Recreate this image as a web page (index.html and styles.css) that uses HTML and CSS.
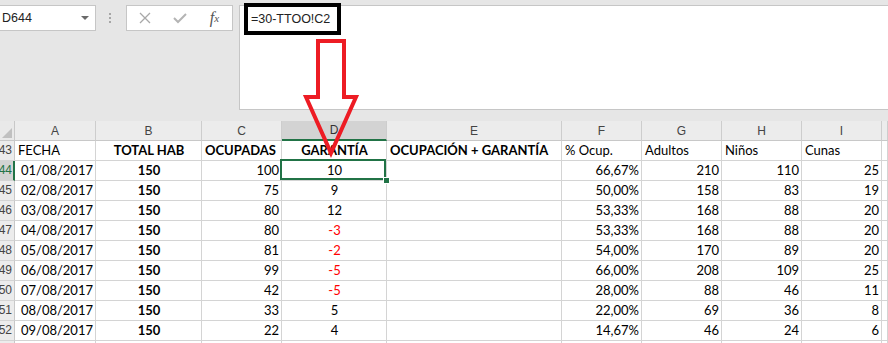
FILE: index.html
```html
<!DOCTYPE html>
<html>
<head>
<meta charset="utf-8">
<link rel="stylesheet" href="styles.css">
</head>
<body>
<div class="toolbar">
  <div class="namebox"><span>D644</span><span class="caret"></span></div>
  <div class="dots"><i></i><i></i><i></i></div>
  <div class="btns">
    <span class="btn"><svg width="12" height="12" viewBox="0 0 12 12"><path d="M1 1 L11 11 M11 1 L1 11" stroke="#a8a8a8" stroke-width="1.3" fill="none"/></svg></span>
    <span class="btn"><svg width="14" height="12" viewBox="0 0 14 12"><path d="M1 6 L5 10 L13 2" stroke="#b4b4b4" stroke-width="2" fill="none"/></svg></span>
    <span class="btn fx">f<sub>x</sub></span>
  </div>
  <div class="formula"><span class="ftext">=30-TTOO!C2</span></div>
</div>

<div class="grid">
  <div class="corner"><i></i></div>
  <div class="ch">A</div><div class="ch">B</div><div class="ch">C</div><div class="ch sel">D</div><div class="ch">E</div><div class="ch">F</div><div class="ch">G</div><div class="ch">H</div><div class="ch">I</div><div class="ch"></div>

  <div class="rh"><span>643</span></div>
  <div class="c l">FECHA</div><div class="c m b">TOTAL HAB</div><div class="c l b">OCUPADAS</div><div class="c m b">GARANTÍA</div><div class="c l b">OCUPACIÓN + GARANTÍA</div><div class="c l">% Ocup.</div><div class="c l">Adultos</div><div class="c l">Niños</div><div class="c l">Cunas</div><div class="c"></div>

  <div class="rh rsel"><span>644</span></div>
  <div class="c r">01/08/2017</div><div class="c m b">150</div><div class="c r">100</div><div class="c m active">10</div><div class="c"></div><div class="c r">66,67%</div><div class="c r">210</div><div class="c r">110</div><div class="c r">25</div><div class="c"></div>

  <div class="rh"><span>645</span></div>
  <div class="c r">02/08/2017</div><div class="c m b">150</div><div class="c r">75</div><div class="c m">9</div><div class="c"></div><div class="c r">50,00%</div><div class="c r">158</div><div class="c r">83</div><div class="c r">19</div><div class="c"></div>

  <div class="rh"><span>646</span></div>
  <div class="c r">03/08/2017</div><div class="c m b">150</div><div class="c r">80</div><div class="c m">12</div><div class="c"></div><div class="c r">53,33%</div><div class="c r">168</div><div class="c r">88</div><div class="c r">20</div><div class="c"></div>

  <div class="rh"><span>647</span></div>
  <div class="c r">04/08/2017</div><div class="c m b">150</div><div class="c r">80</div><div class="c m neg">-3</div><div class="c"></div><div class="c r">53,33%</div><div class="c r">168</div><div class="c r">88</div><div class="c r">20</div><div class="c"></div>

  <div class="rh"><span>648</span></div>
  <div class="c r">05/08/2017</div><div class="c m b">150</div><div class="c r">81</div><div class="c m neg">-2</div><div class="c"></div><div class="c r">54,00%</div><div class="c r">170</div><div class="c r">89</div><div class="c r">20</div><div class="c"></div>

  <div class="rh"><span>649</span></div>
  <div class="c r">06/08/2017</div><div class="c m b">150</div><div class="c r">99</div><div class="c m neg">-5</div><div class="c"></div><div class="c r">66,00%</div><div class="c r">208</div><div class="c r">109</div><div class="c r">25</div><div class="c"></div>

  <div class="rh"><span>650</span></div>
  <div class="c r">07/08/2017</div><div class="c m b">150</div><div class="c r">42</div><div class="c m neg">-5</div><div class="c"></div><div class="c r">28,00%</div><div class="c r">88</div><div class="c r">46</div><div class="c r">11</div><div class="c"></div>

  <div class="rh"><span>651</span></div>
  <div class="c r">08/08/2017</div><div class="c m b">150</div><div class="c r">33</div><div class="c m">5</div><div class="c"></div><div class="c r">22,00%</div><div class="c r">69</div><div class="c r">36</div><div class="c r">8</div><div class="c"></div>

  <div class="rh"><span>652</span></div>
  <div class="c r">09/08/2017</div><div class="c m b">150</div><div class="c r">22</div><div class="c m">4</div><div class="c"></div><div class="c r">14,67%</div><div class="c r">46</div><div class="c r">24</div><div class="c r">6</div><div class="c"></div>

  <div class="rh"><span>653</span></div>
  <div class="c"></div><div class="c"></div><div class="c"></div><div class="c"></div><div class="c"></div><div class="c"></div><div class="c"></div><div class="c"></div><div class="c"></div><div class="c"></div>
</div>

<svg class="arrow" width="888" height="343" viewBox="0 0 888 343">
  <path d="M318 41 L344 41 L344 97 L356 97 L331 153 L306 97 L318 97 Z" fill="none" stroke="#ed1c24" stroke-width="4" stroke-linejoin="miter"/>
</svg>
</body>
</html>
```
FILE: styles.css
```css
html, body {
  margin: 0;
  padding: 0;
}
body {
  width: 888px;
  height: 343px;
  overflow: hidden;
  background: #ffffff;
  position: relative;
}

.toolbar {
  height: 121px;
  box-sizing: border-box;
  padding-top: 5px;
  background: #e6e6e6;
  display: flex;
  align-items: flex-start;
}
.namebox {
  margin-left: -1px;
  width: 97px;
  height: 26px;
  box-sizing: border-box;
  border: 1px solid #c6c6c6;
  background: #fff;
  display: flex;
  align-items: center;
  justify-content: space-between;
  padding: 0 6px 0 2px;
  font: 12.5px "Liberation Sans", Arial, sans-serif;
  color: #222;
}
.caret {
  width: 0;
  height: 0;
  border-left: 4px solid transparent;
  border-right: 4px solid transparent;
  border-top: 4px solid #6a6a6a;
}
.dots {
  margin-left: 13px;
  margin-top: 8px;
  width: 3px;
  display: flex;
  flex-direction: column;
  gap: 2px;
}
.dots i {
  display: block;
  width: 2px;
  height: 2px;
  background: #a6a6a6;
}
.btns {
  margin-left: 14px;
  width: 107px;
  height: 26px;
  box-sizing: border-box;
  border: 1px solid #c6c6c6;
  background: #fff;
  display: flex;
  align-items: center;
}
.btn {
  width: 36px;
  height: 24px;
  display: flex;
  align-items: center;
  justify-content: center;
}
.fx {
  font: italic 16px "Liberation Serif", "Times New Roman", serif;
  color: #555;
  line-height: 1;
}
.fx sub {
  font-size: 11px;
  vertical-align: -1px;
}
.formula {
  margin-left: 6px;
  flex: 1;
  height: 105px;
  box-sizing: border-box;
  border: 1px solid #c6c6c6;
  border-right: none;
  background: #fff;
  padding: 0 0 0 4px;
}
.ftext {
  display: inline-block;
  margin-top: -3px;
  width: 97px;
  height: 32px;
  box-sizing: border-box;
  border: 4px solid #000;
  padding: 0 0 0 3px;
  font: 12.5px/24px "Liberation Sans", Arial, sans-serif;
  color: #222;
  background: #fff;
}

.grid {
  display: grid;
  grid-template-columns: 15px 81px 106px 80px 105px 175px 80px 80px 80px 80px 6px;
  grid-auto-rows: 20px;
}
.corner {
  background: #e9e9e9;
  border-right: 1px solid #c8c8c8;
  border-bottom: 1px solid #c8c8c8;
  box-sizing: border-box;
  position: relative;
}
.corner i {
  position: absolute;
  right: 2px;
  bottom: 2px;
  width: 10px;
  height: 10px;
  background: #c0c0c0;
  clip-path: polygon(100% 0, 100% 100%, 0 100%);
}
.ch {
  background: #ececec;
  border-right: 1px solid #cdcdcd;
  border-bottom: 1px solid #c8c8c8;
  box-sizing: border-box;
  display: flex;
  align-items: center;
  justify-content: center;
  font: 12px "Liberation Sans", Arial, sans-serif;
  color: #444;
}
.ch.sel {
  background: #d3d3d3;
  border-bottom: 2px solid #217346;
  color: #333;
}
.rh {
  background: #ececec;
  border-right: 1px solid #c8c8c8;
  border-bottom: 1px solid #d4d4d4;
  box-sizing: border-box;
  display: flex;
  align-items: flex-end;
  justify-content: flex-end;
  overflow: hidden;
  padding: 0 2px 2px 0;
  font: 12px/15px "Liberation Sans", Arial, sans-serif;
  color: #444;
}
.rh span {
  flex: none;
}
.rh.rsel {
  background: #d3d3d3;
  border-right: 2px solid #217346;
  padding-right: 1px;
  color: #217346;
}
.c {
  border-right: 1px solid #d4d4d4;
  border-bottom: 1px solid #d4d4d4;
  box-sizing: border-box;
  display: flex;
  align-items: flex-end;
  padding: 0 2px 1px 3px;
  white-space: nowrap;
  font: 13px/1.2 Lato, "Liberation Sans", sans-serif;
  color: #000;
}
.c.l { justify-content: flex-start; }
.c.r { justify-content: flex-end; }
.c.m { justify-content: center; }
.c.b { font-weight: 700; }
.c.neg { color: #ff0000; }
.c.active {
  position: relative;
}
.c.active::before {
  content: "";
  position: absolute;
  top: -2px;
  left: -2px;
  right: 0;
  bottom: 0;
  border: 2px solid #217346;
}
.c.active::after {
  content: "";
  position: absolute;
  right: -4px;
  bottom: -4px;
  width: 5px;
  height: 5px;
  background: #217346;
  border: 1px solid #fff;
  z-index: 2;
}

.arrow {
  position: absolute;
  top: 0;
  left: 0;
  pointer-events: none;
  z-index: 5;
}
```
